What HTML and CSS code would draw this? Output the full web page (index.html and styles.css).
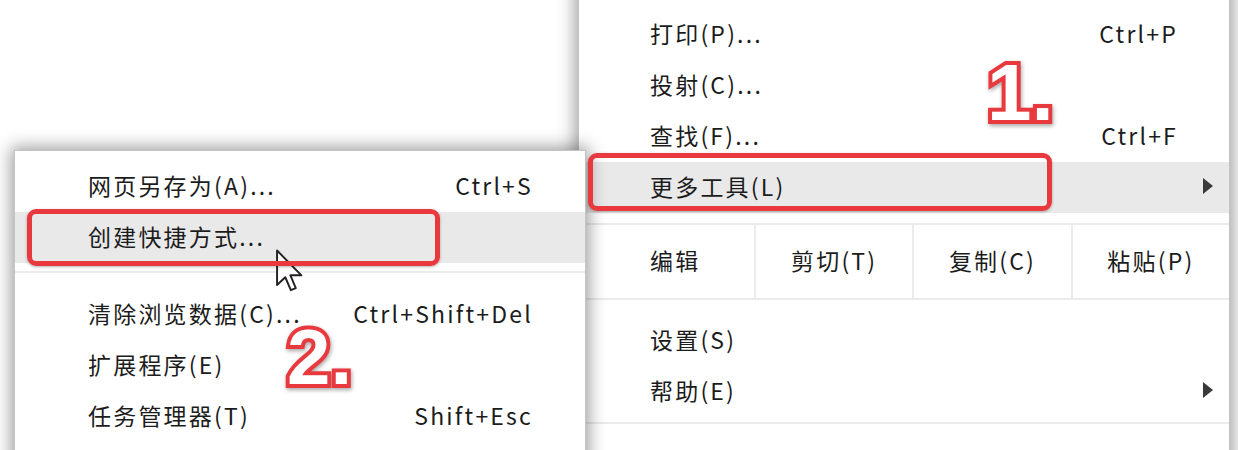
FILE: index.html
```html
<!DOCTYPE html>
<html lang="zh-CN">
<head>
  <meta charset="UTF-8">
  <title>更多工具 - 创建快捷方式</title>
  <link rel="stylesheet" href="styles.css">
</head>
<body>
  <div class="stage">
    <!-- main browser menu -->
    <div class="menu menu-main">
      <div class="item"><span class="label">打印(P)...</span><span class="key">Ctrl+P</span></div>
      <div class="item"><span class="label">投射(C)...</span></div>
      <div class="item"><span class="label">查找(F)...</span><span class="key">Ctrl+F</span></div>
      <div class="item active"><span class="label">更多工具(L)</span><span class="arrow"></span></div>
      <div class="sep sep-tight"></div>
      <div class="edit-row">
        <span class="edit-label">编辑</span>
        <span class="edit-btn">剪切(T)</span>
        <span class="edit-btn">复制(C)</span>
        <span class="edit-btn">粘贴(P)</span>
      </div>
      <div class="spacer"></div>
      <div class="item"><span class="label">设置(S)</span></div>
      <div class="item"><span class="label">帮助(E)</span><span class="arrow"></span></div>
      <div class="sep sep-bottom"></div>
    </div>

    <!-- "more tools" submenu -->
    <div class="menu menu-sub">
      <div class="item"><span class="label">网页另存为(A)...</span><span class="key">Ctrl+S</span></div>
      <div class="item active"><span class="label">创建快捷方式...</span></div>
      <div class="sep sep-sub"></div>
      <div class="item"><span class="label">清除浏览数据(C)...</span><span class="key">Ctrl+Shift+Del</span></div>
      <div class="item"><span class="label">扩展程序(E)</span></div>
      <div class="item"><span class="label">任务管理器(T)</span><span class="key">Shift+Esc</span></div>
    </div>

    <!-- pointer -->
    <svg class="cursor" width="28" height="44" viewBox="0 0 13 20">
      <path d="M0.5 0.5 L0.5 16.5 L4.3 12.9 L6.9 18.9 L9.2 17.9 L6.7 12 L11.8 12 Z" fill="#fff" stroke="#222" stroke-width="0.9" stroke-linejoin="round"/>
    </svg>

    <!-- annotations -->
    <div class="mark mark-1"></div>
    <div class="mark mark-2"></div>
    <span class="step step-1">1.</span>
    <span class="step step-2">2.</span>
  </div>
</body>
</html>
```

FILE: styles.css
```css
body {
  margin: 0;
  background: #fff;
  font-family: "Noto Sans CJK SC", "Open Sans", sans-serif;
  color: #1c1c1c;
}
.stage {
  position: relative;
  width: 1238px;
  height: 450px;
  overflow: hidden;
}
.menu {
  position: absolute;
  background: #fff;
  border: 1px solid #c4c4c4;
  box-shadow: 0 0 16px 3px rgba(0, 0, 0, 0.38);
  display: flex;
  flex-direction: column;
}
.menu-main {
  left: 578px;
  top: -30px;
  width: 650px;
  height: 520px;
  padding-top: 38px;
}
.menu-sub {
  left: 14px;
  top: 150px;
  width: 570px;
  height: 340px;
  padding-top: 10px;
}
.item {
  box-sizing: border-box;
  height: 51px;
  padding-bottom: 4px;
  display: flex;
  align-items: center;
  justify-content: space-between;
  font-size: 23px;
  letter-spacing: 2.2px;
  flex-shrink: 0;
}
.menu-main .item {
  padding-left: 71px;
  padding-right: 16px;
}
.menu-main .key {
  margin-right: 35px;
}
.menu-sub .item {
  padding-left: 73px;
  padding-right: 52px;
}
.item.active {
  background: #e9e9e9;
}
.arrow {
  width: 0;
  height: 0;
  border-left: 10px solid #3a3a3a;
  border-top: 8px solid transparent;
  border-bottom: 8px solid transparent;
}
.sep {
  flex-shrink: 0;
  border-bottom: 2px solid #ebebeb;
}
.sep-tight {
  height: 10px;
}
.sep-sub {
  height: 8px;
  margin-bottom: 16px;
}
.sep-bottom {
  height: 5px;
}
.edit-row {
  display: grid;
  grid-template-columns: 175px 1fr 1fr 1fr;
  height: 73px;
  border-bottom: 2px solid #ebebeb;
  font-size: 23px;
  letter-spacing: 2.2px;
  flex-shrink: 0;
}
.edit-label {
  display: flex;
  align-items: center;
  padding-left: 71px;
  padding-bottom: 3px;
}
.edit-btn {
  display: flex;
  align-items: center;
  justify-content: center;
  padding-bottom: 3px;
  border-left: 2px solid #ebebeb;
}
.spacer {
  height: 15px;
  flex-shrink: 0;
}
.cursor {
  position: absolute;
  left: 276px;
  top: 249px;
}
.mark {
  position: absolute;
  border: 5px solid #e8393e;
  border-radius: 9px;
  box-shadow: 0 1px 3px rgba(0, 0, 0, 0.3);
}
.mark-1 {
  left: 588px;
  top: 153px;
  width: 454px;
  height: 48px;
}
.mark-2 {
  left: 27px;
  top: 209px;
  width: 403px;
  height: 47px;
}
.step {
  position: absolute;
  font-family: "Liberation Sans", Arial, sans-serif;
  font-weight: bold;
  font-size: 80px;
  line-height: 1;
  color: #fff;
  -webkit-text-stroke: 8px #e8393e;
  paint-order: stroke fill;
  filter: drop-shadow(1px 2px 2px rgba(0, 0, 0, 0.35));
}
.step-1 {
  left: 987px;
  top: 53px;
}
.step-2 {
  left: 287px;
  top: 318px;
  font-size: 78px;
}
```
